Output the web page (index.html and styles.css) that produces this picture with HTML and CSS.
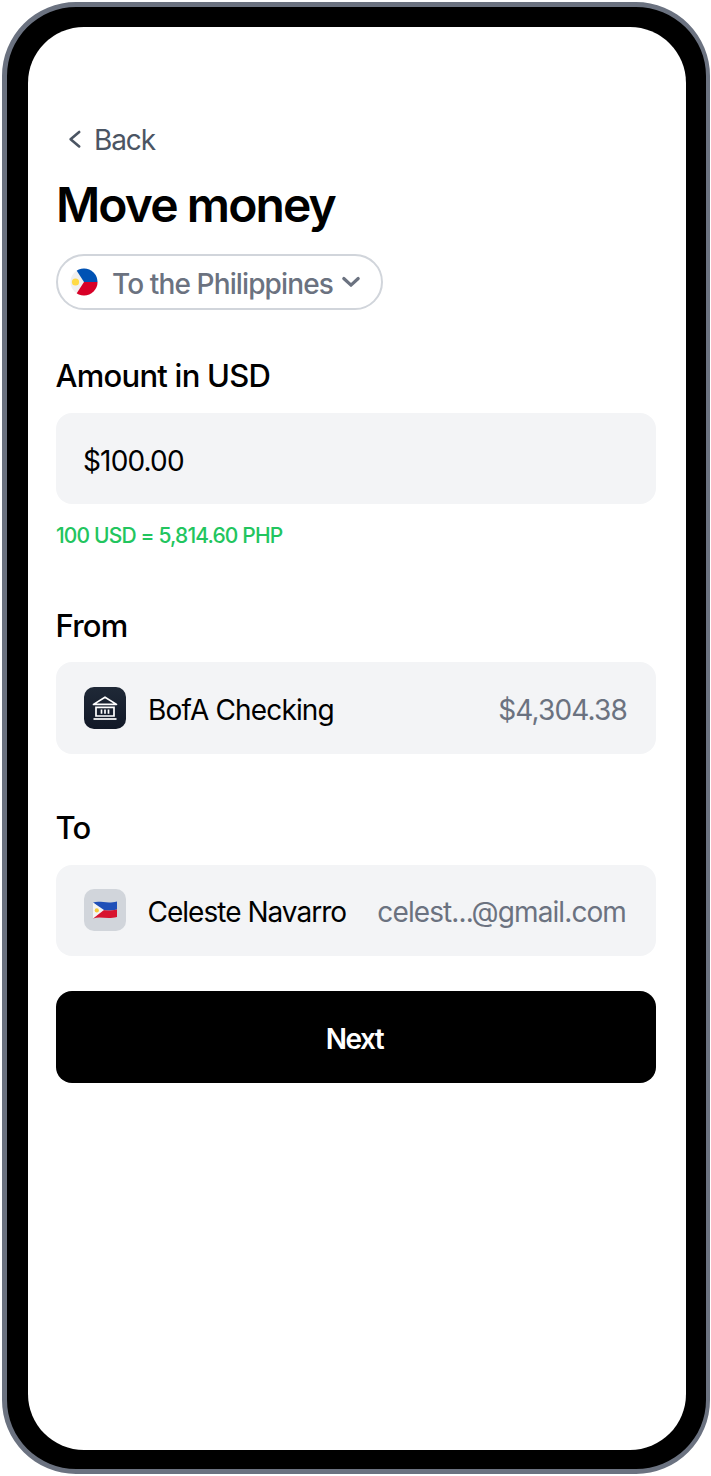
FILE: index.html
```html
<!DOCTYPE html>
<html lang="en">
<head>
	<meta charset="UTF-8">
	<title>Move money</title>
	<link rel="stylesheet" href="styles.css">
</head>
<body>
	<div class="phone">
		<div class="screen">
			<div class="back">
				<svg width="14" height="20" viewBox="0 0 14 20"><path d="M11.2 2 L2.6 9.2 L11.2 16.4" fill="none" stroke="#4b5563" stroke-width="2.6" stroke-linecap="round" stroke-linejoin="round"/></svg>
				<span>Back</span>
			</div>
			<h1 class="title">Move money</h1>
			<div class="country">
				<svg class="country-flag" width="28" height="28" viewBox="0 0 28 28">
					<defs><clipPath id="round"><circle cx="14" cy="14" r="13.5"/></clipPath></defs>
					<g clip-path="url(#round)">
						<rect width="28" height="28" fill="#f0f0f0"/>
						<path d="M5 0 H28 V14 H14 Z" fill="#0052b4"/>
						<path d="M5 28 H28 V14 H14 Z" fill="#d80027"/>
						<circle cx="5.5" cy="14" r="3.6" fill="#ffda44"/>
					</g>
				</svg>
				<span>To the Philippines</span>
				<svg width="20" height="20" viewBox="0 0 20 20"><path d="M2.8 6.5 L10 13.2 L17.2 6.5" fill="none" stroke="#6b7280" stroke-width="3.2" stroke-linecap="round" stroke-linejoin="round"/></svg>
			</div>

			<h2 class="label label-amount">Amount in USD</h2>
			<div class="field amount"><span>$100.00</span></div>
			<p class="rate">100 USD = 5,814.60 PHP</p>

			<h2 class="label label-from">From</h2>
			<div class="field row">
				<div class="tile tile-bank">
					<svg width="26" height="26" viewBox="0 0 26 26" fill="none" stroke="#fff" stroke-width="1.7">
						<path d="M1.5 9.4 L13 2.2 L24.5 9.4 Z" stroke-linejoin="round"/>
						<path d="M4 12.4 H22 V21 H4 Z"/>
						<path d="M1.5 24 H24.5"/>
						<path d="M9.5 14.6 V18.8 M13 14.6 V18.8 M16.5 14.6 V18.8" stroke-width="1.7"/>
					</svg>
				</div>
				<span class="name">BofA Checking</span>
				<span class="side">$4,304.38</span>
			</div>

			<h2 class="label label-to">To</h2>
			<div class="field row">
				<div class="tile tile-flag">
					<svg width="26" height="20" viewBox="0 0 26 20">
						<path d="M1 2.5 C8 .5 15 4 25 1.5 V9.5 C18 11 14 10.5 10 10 Z" fill="#1f4fb8"/>
						<path d="M10 10 C14 10.5 18 11 25 9.5 V17 C15 19.5 8 16 1 18.5 Z" fill="#d8132f"/>
						<path d="M1 2.5 L12 10 L1 18.5 Z" fill="#f4f4f4"/>
						<circle cx="4.8" cy="10.4" r="2.1" fill="#f5c93a"/>
					</svg>
				</div>
				<span class="name name-to">Celeste Navarro</span>
				<span class="side side-mail">celest...@gmail.com</span>
			</div>

			<button class="next">Next</button>
		</div>
	</div>
</body>
</html>
```

FILE: styles.css
```css
*{
	margin: 0;
	padding: 0;
	box-sizing: border-box;
}
body{
	background: #fff;
	font-family: "Inter", "Liberation Sans", sans-serif;
	color: #000;
}
.phone{
	width: 708px;
	height: 1472px;
	margin: 2px 0 0 2px;
	padding: 20px 20px 19px 21px;
	background: #000;
	border: 5px solid #6b7280;
	border-right-width: 4px;
	border-radius: 74px;
}
.screen{
	height: 100%;
	padding: 96px 30px 0 28px;
	background: #fff;
	border-radius: 56px;
}
.back{
	display: flex;
	align-items: center;
	gap: 12px;
	height: 34px;
	padding-left: 12px;
	font-size: 28px;
	letter-spacing: -1.1px;
	color: #4b5563;
}
.title{
	margin-top: 20px;
	font-size: 48px;
	line-height: 56px;
	font-weight: 600;
	letter-spacing: -1.9px;
}
.country{
	display: flex;
	width: 327px;
	align-items: center;
	height: 56px;
	margin-top: 21px;
	padding-left: 12px;
	border: 2px solid #d1d5db;
	border-radius: 28px;
	font-size: 28px;
	font-weight: 500;
	color: #6b7280;
	letter-spacing: -0.88px;
}
.country-flag{
	margin-right: 14px;
}
.country span{
	margin-right: 8px;
	padding-top: 3px;
}
.label{
	margin-left: -0.5px;
	font-size: 31px;
	line-height: 36px;
	font-weight: 500;
	letter-spacing: -0.75px;
}
.label-amount{
	margin-top: 48px;
}
.label-from{
	margin-top: 59px;
}
.label-to{
	margin-top: 56.5px;
}
.field{
	height: 91.5px;
	margin-top: 18.5px;
	background: #f3f4f6;
	border-radius: 16px;
	font-size: 28px;
	letter-spacing: -0.85px;
}
.amount{
	display: flex;
	align-items: center;
	padding-left: 27px;
}
.amount span{
	padding-top: 6px;
}
.name, .side{
	padding-top: 4px;
}
.rate{
	margin-top: 18.5px;
	font-size: 21px;
	line-height: 26px;
	font-weight: 500;
	letter-spacing: -0.85px;
	color: #22c55e;
}
.row{
	display: flex;
	align-items: center;
	padding: 0 29px 0 28px;
}
.tile{
	display: flex;
	align-items: center;
	justify-content: center;
	width: 42px;
	height: 42px;
	border-radius: 10px;
}
.tile-bank{
	background: linear-gradient(#1f2937, #111827);
}
.tile-flag{
	background: #d1d5db;
}
.name{
	margin-left: 22px;
}
.name-to{
	margin-left: 21.5px;
	letter-spacing: -0.98px;
}
.side{
	margin-left: auto;
	color: #6b7280;
}
.side-mail{
	margin-right: 1px;
	letter-spacing: -0.9px;
}
.next{
	display: block;
	width: 100%;
	height: 91.5px;
	margin-top: 35px;
	padding: 4px 3px 0 0;
	border: 0;
	border-radius: 16px;
	background: #000;
	color: #fff;
	font-family: inherit;
	font-size: 28px;
	font-weight: 600;
	letter-spacing: -1.5px;
}
```
